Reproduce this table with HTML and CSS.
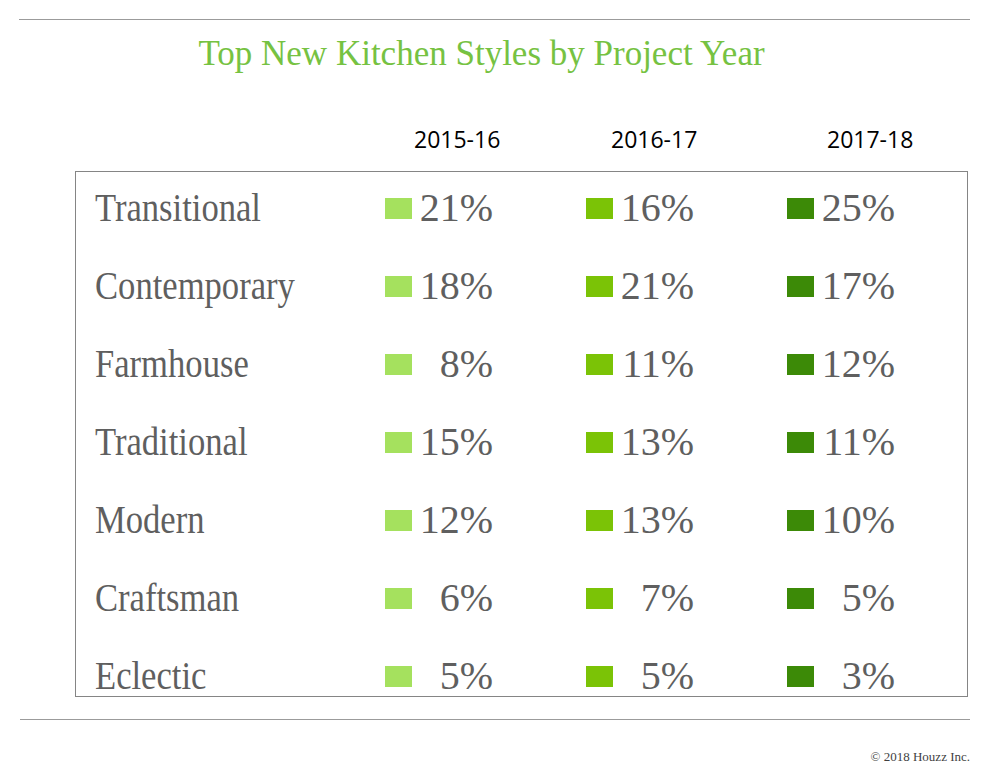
FILE: index.html
```html
<!DOCTYPE html>
<html lang="en">
<head>
<meta charset="utf-8">
<title>Top New Kitchen Styles by Project Year</title>
<link rel="stylesheet" href="styles.css">
</head>
<body>
<div class="page">
  <hr class="rule rule-top">
  <h1 class="title">Top New Kitchen Styles by Project Year</h1>
  <div class="years"><span>2015-16</span><span>2016-17</span><span>2017-18</span></div>
  <div class="table">
    <div class="row"><span class="label">Transitional</span><span class="cell"><i class="sw c1"></i><span class="pct">21%</span></span><span class="cell"><i class="sw c2"></i><span class="pct">16%</span></span><span class="cell"><i class="sw c3"></i><span class="pct">25%</span></span></div>
    <div class="row"><span class="label">Contemporary</span><span class="cell"><i class="sw c1"></i><span class="pct">18%</span></span><span class="cell"><i class="sw c2"></i><span class="pct">21%</span></span><span class="cell"><i class="sw c3"></i><span class="pct">17%</span></span></div>
    <div class="row"><span class="label">Farmhouse</span><span class="cell"><i class="sw c1"></i><span class="pct">8%</span></span><span class="cell"><i class="sw c2"></i><span class="pct">11%</span></span><span class="cell"><i class="sw c3"></i><span class="pct">12%</span></span></div>
    <div class="row"><span class="label">Traditional</span><span class="cell"><i class="sw c1"></i><span class="pct">15%</span></span><span class="cell"><i class="sw c2"></i><span class="pct">13%</span></span><span class="cell"><i class="sw c3"></i><span class="pct">11%</span></span></div>
    <div class="row"><span class="label">Modern</span><span class="cell"><i class="sw c1"></i><span class="pct">12%</span></span><span class="cell"><i class="sw c2"></i><span class="pct">13%</span></span><span class="cell"><i class="sw c3"></i><span class="pct">10%</span></span></div>
    <div class="row"><span class="label">Craftsman</span><span class="cell"><i class="sw c1"></i><span class="pct">6%</span></span><span class="cell"><i class="sw c2"></i><span class="pct">7%</span></span><span class="cell"><i class="sw c3"></i><span class="pct">5%</span></span></div>
    <div class="row"><span class="label">Eclectic</span><span class="cell"><i class="sw c1"></i><span class="pct">5%</span></span><span class="cell"><i class="sw c2"></i><span class="pct">5%</span></span><span class="cell"><i class="sw c3"></i><span class="pct">3%</span></span></div>
  </div>
  <hr class="rule rule-bottom">
  <div class="copy">© 2018 Houzz Inc.</div>
</div>
</body>
</html>
```

FILE: styles.css
```css
html, body {
  margin: 0;
  padding: 0;
  background: #ffffff;
}

.page {
  width: 990px;
  height: 780px;
  overflow: hidden;
}

.rule {
  border: 0;
  height: 1px;
  background: #9b9b9b;
  margin: 0;
}

.rule-top {
  margin: 19px 20px 0 19px;
}

.rule-bottom {
  margin: 22px 20px 0 20px;
}

.title {
  margin: 14px 0 0 0;
  padding-right: 27px;
  font-family: "Liberation Serif", "Times New Roman", serif;
  font-size: 35px;
  line-height: 40px;
  font-weight: normal;
  color: #76c242;
  text-align: center;
}

.years {
  display: grid;
  grid-template-columns: 197px 216px auto;
  padding-left: 414px;
  margin-top: 50px;
  font-family: "Open Sans", "Liberation Sans", sans-serif;
  font-size: 23px;
  line-height: 31px;
  font-weight: 500;
  color: #000000;
}

.table {
  margin: 16px 22px 0 75px;
  border: 1px solid #858585;
  height: 524px;
  display: grid;
  grid-template-rows: repeat(6, 78px) 56px;
}

.row {
  display: grid;
  grid-template-columns: 290px 201px 201px 201px;
  align-items: baseline;
  padding-left: 19px;
  line-height: 72px;
  font-family: "Liberation Serif", "Times New Roman", serif;
  color: #5f5f5f;
}

.label {
  display: inline-block;
  font-size: 40px;
  transform: scaleX(0.865);
  transform-origin: left center;
  white-space: nowrap;
}

.cell {
  font-size: 40px;
  white-space: nowrap;
}

.sw {
  display: inline-block;
  width: 27px;
  height: 21px;
  margin-bottom: 2px;
  vertical-align: baseline;
}

.c1 { background: #a5e15e; }
.c2 { background: #7bc306; }
.c3 { background: #3c8a07; }

.pct {
  display: inline-block;
  width: 81px;
  text-align: right;
}

.copy {
  margin-top: 29px;
  padding-right: 20px;
  text-align: right;
  font-family: "Liberation Serif", "Times New Roman", serif;
  font-size: 13px;
  line-height: 15px;
  color: #3f3f3f;
}
```
